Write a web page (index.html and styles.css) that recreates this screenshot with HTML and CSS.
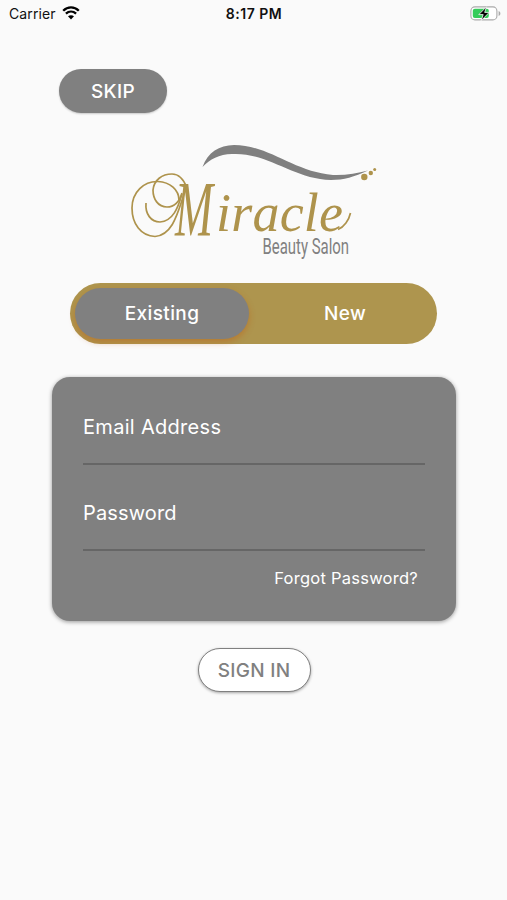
FILE: index.html
```html
<!DOCTYPE html>
<html lang="en">

<head>
    <meta charset="UTF-8">
    <meta name="viewport" content="width=device-width, initial-scale=1.0">
    <title>Miracle Beauty Salon</title>
    <link rel="stylesheet" href="styles.css">
</head>

<body>
    <div class="status">
        <div class="carrier">
            <span>Carrier</span>
            <svg class="wifi" viewBox="0 0 18 14">
                <path d="M1.200 4.700C5.700.2 12.300.2 16.800 4.700M3.900 7.700c3-2.800 7.200-2.800 10.200 0" />
                <path class="dot" d="M6 10.300c1.800-1.500 4.200-1.500 6 0l-3 3.200z" />
            </svg>
        </div>
        <span class="time">8:17 PM</span>
        <svg class="battery" viewBox="0 0 31 15">
            <rect class="case" x=".9" y=".9" width="26" height="13" rx="4" />
            <path class="tip" d="M28.600 5c2.400 1 2.400 4 0 5z" />
            <rect class="level" x="2.800" y="2.800" width="16" height="9.200" rx="2" />
            <path class="bolt" d="M16.500.8 8.800 8.600h4.400l-2 6 8-8.200h-4.500z" />
        </svg>
    </div>

    <div class="page">
        <button class="skip">SKIP</button>

        <svg class="logo" viewBox="125 135 260 130">
            <path class="wave" d="M202.500 167C208 152 219 145.500 234 145C269 145 294 172 333 175C346 175.500 357 173 368 170.500C354 177 344 180 331 180C293 179 268 152 232 154C219 154.500 210 159 202.500 167z" />
            <g class="gold">
                <circle cx="364.300" cy="177" r="3.200" />
                <circle cx="370.800" cy="173" r="2.200" />
                <circle cx="374.700" cy="169.600" r="1.500" />
            </g>
            <!-- swirls on the left of the M -->
            <path class="swirl" d="M186 189C179 206 175 235 155 236.500C141 236 132 224 132 208C132 192 144 181 158 181.500C170 182 179 190 179 200" />
            <path class="swirl" d="M146 203C145 214 151 222 160 222C173 221 178 208 182 194" />
            <path class="swirl" d="M182 193C179 203 174 207 167 207C158 207 153 199 153 190C154 180 162 174 172 174C180 174 184 180 187 188" />
            <!-- tail of the e -->
            <path class="swirl" d="M338 229.500C344 227 349 220 350.500 213" />
            <text class="script" x="175" y="235" font-size="78" textLength="38" lengthAdjust="spacingAndGlyphs">M</text>
            <text class="script" x="216" y="231" font-size="54" textLength="127" lengthAdjust="spacing">iracle</text>
            <text class="sub" x="262.500" y="254" font-size="21.500" textLength="86.500" lengthAdjust="spacingAndGlyphs">Beauty Salon</text>
        </svg>

        <div class="tabs">
            <button class="tab active">Existing</button>
            <button class="tab">New</button>
        </div>

        <div class="card">
            <div class="field">Email Address</div>
            <div class="field">Password</div>
            <a class="forgot">Forgot Password?</a>
        </div>

        <button class="signin">SIGN IN</button>
    </div>
</body>

</html>
```
FILE: styles.css
```css
* {
    padding: 0;
    margin: 0;
    box-sizing: border-box;
}

body {
    height: 900px;
    background: #fafafa;
    font-family: Inter, "Liberation Sans", sans-serif;
    overflow: hidden;
}

button {
    border: none;
    font-family: inherit;
    cursor: pointer;
}

.status {
    display: grid;
    grid-template-columns: 1fr auto 1fr;
    align-items: center;
    height: 28px;
    padding: 0 6px 0 9px;
    font-size: 14px;
    color: #111;
}

.carrier {
    display: flex;
    align-items: center;
    gap: 6px;
    margin-top: -2px;
    letter-spacing: 0.1px;
}

.wifi {
    width: 18px;
    height: 14px;
    fill: none;
    stroke: #000;
    stroke-width: 2.3;
}

.wifi .dot {
    fill: #000;
    stroke: none;
}

.time {
    margin: -2px 2px 0 0;
    font-weight: 600;
    letter-spacing: 0.5px;
}

.battery {
    width: 31px;
    height: 15px;
    justify-self: end;
    margin-top: -2px;
}

.battery .case {
    fill: #fff;
    stroke: #aaa;
    stroke-width: 1.1;
}

.battery .tip {
    fill: #aaa;
}

.battery .level {
    fill: #35cc5a;
}

.battery .bolt {
    fill: #000;
    stroke: #fff;
    stroke-width: 0.8;
}

.page {
    display: flex;
    flex-direction: column;
    align-items: center;
    padding: 41px 51px 0 52px;
}

.skip {
    align-self: flex-start;
    width: 108px;
    height: 44px;
    margin-left: 7px;
    border-radius: 22px;
    background: #808080;
    color: #fff;
    font-size: 19px;
    font-weight: 500;
    letter-spacing: 0.3px;
    box-shadow: 0 1px 2px rgba(0, 0, 0, 0.2);
}

.logo {
    width: 260px;
    height: 130px;
    margin-top: 22px;
    margin-left: 2px;
}

.wave {
    fill: #808080;
}

.gold,
.script {
    fill: #ae934c;
}

.swirl {
    fill: none;
    stroke: #ae934c;
    stroke-width: 1.7;
}

.script {
    font-family: "Liberation Serif", serif;
    font-style: italic;
}

.sub {
    fill: #808080;
    font-family: Roboto, sans-serif;
}

.tabs {
    display: flex;
    width: 367px;
    height: 61px;
    margin-top: 18px;
    padding: 5px;
    border-radius: 31px;
    background: #ae954e;
    /* half pixel off so the pill sits on the centre of the screen */
    margin-right: 1px;
}

.tab {
    flex: 1;
    border-radius: 26px;
    background: none;
    color: #fff;
    font-size: 19px;
    font-weight: 500;
    letter-spacing: 0.4px;
}

.tab:last-child {
    padding-left: 9px;
}

.tab.active {
    flex: 0 0 174px;
    background: #808080;
    box-shadow: 0 3px 6px rgba(190, 90, 20, 0.45);
}

.card {
    width: 404px;
    height: 244px;
    margin-top: 33px;
    padding: 13px 31px 0;
    border-radius: 18px;
    background: #808080;
    color: #fff;
    box-shadow: 0 1px 4px rgba(0, 0, 0, 0.4);
}

.field {
    height: 75px;
    padding-top: 25px;
    border-bottom: 2px solid #666;
    font-size: 20px;
    line-height: 25px;
    letter-spacing: 0.3px;
}

.field + .field {
    height: 86px;
    padding-top: 36px;
    letter-spacing: 0.15px;
}

.forgot {
    display: block;
    padding: 16px 7px 0 0;
    text-align: right;
    font-size: 16.5px;
    line-height: 22px;
    letter-spacing: 0.25px;
}

.signin {
    width: 113px;
    height: 44px;
    margin-top: 27px;
    border: 1px solid #808080;
    border-radius: 22px;
    background: #fff;
    color: #808080;
    font-size: 19px;
    font-weight: 500;
    letter-spacing: 0.3px;
    box-shadow: 0 1px 3px rgba(0, 0, 0, 0.35);
}
```
